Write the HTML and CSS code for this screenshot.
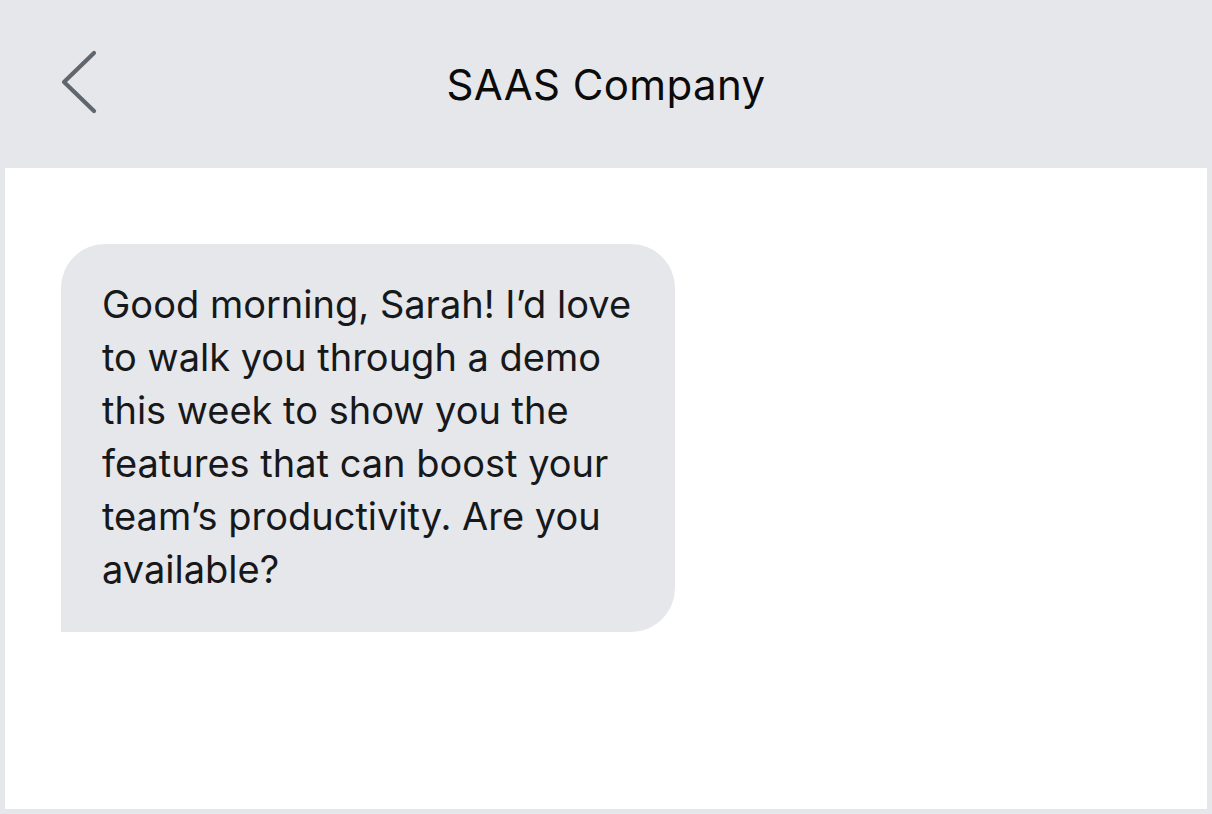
FILE: index.html
```html
<!DOCTYPE html>
<html lang="en">
<head>
<meta charset="utf-8">
<title>SAAS Company</title>
<link rel="stylesheet" href="styles.css">
</head>
<body>
<div class="frame">
  <header class="topbar">
    <button class="back" aria-label="Back">
      <svg width="40" height="64" viewBox="0 0 40 64" aria-hidden="true">
        <path d="M34 3 L4 32 L34 61" fill="none" stroke="#60666d" stroke-width="4.2" stroke-linecap="round" stroke-linejoin="round"/>
      </svg>
    </button>
    <h1 class="title">SAAS Company</h1>
  </header>
  <main class="thread">
    <div class="bubble">Good morning, Sarah! I’d love to walk you through a demo this week to show you the features that can boost your team’s productivity. Are you available?</div>
  </main>
</div>
</body>
</html>
```
FILE: styles.css
```css
html, body {
  margin: 0;
  padding: 0;
}
body {
  background: #e5e7eb;
  font-family: Inter, "Liberation Sans", Arial, sans-serif;
  color: #111214;
}
.frame {
  width: 1212px;
  height: 814px;
  box-sizing: border-box;
  padding: 0 5px 5px 5px;
  display: flex;
  flex-direction: column;
  background: #e5e7eb;
}
.topbar {
  height: 168px;
  flex: 0 0 168px;
  display: flex;
  align-items: center;
  justify-content: center;
  position: relative;
  background: #e5e7eb;
}
.back {
  position: absolute;
  left: 55px;
  top: 50px;
  padding: 0;
  margin: 0;
  border: 0;
  background: none;
  display: flex;
}
.title {
  margin: 0;
  font-weight: 400;
  font-size: 42px;
  letter-spacing: 0.4px;
  line-height: 1;
  padding-top: 2px;
  color: #0b0b0c;
}
.thread {
  flex: 1;
  background: #ffffff;
  padding: 76px 0 0 56px;
}
.bubble {
  width: 542px;
  background: #e5e7eb;
  border-radius: 44px 44px 44px 0;
  padding: 34px 31px 36px 41px;
  font-size: 38px;
  line-height: 53px;
  color: #17181a;
}
```
